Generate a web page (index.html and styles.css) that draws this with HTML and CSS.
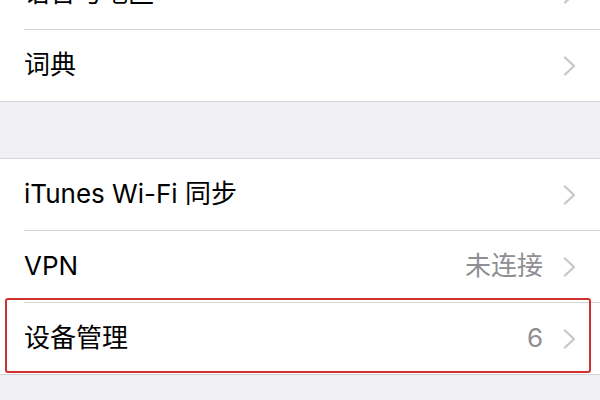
FILE: index.html
```html
<!DOCTYPE html>
<html lang="zh-CN">
<head>
<meta charset="utf-8">
<link rel="stylesheet" href="styles.css">
</head>
<body>
<div class="page">
  <div class="group first">
    <div class="row">
      <span class="label">语言与地区</span>
      <span class="right"><svg class="chev" viewBox="0 0 13 20"><path d="M2 1.5 L11 10 L2 18.5"/></svg></span>
    </div>
    <div class="row">
      <span class="label">词典</span>
      <span class="right"><svg class="chev" viewBox="0 0 13 20"><path d="M2 1.5 L11 10 L2 18.5"/></svg></span>
    </div>
  </div>
  <div class="group second">
    <div class="row">
      <span class="label">iTunes Wi-Fi 同步</span>
      <span class="right"><svg class="chev" viewBox="0 0 13 20"><path d="M2 1.5 L11 10 L2 18.5"/></svg></span>
    </div>
    <div class="row">
      <span class="label">VPN</span>
      <span class="right"><span class="value">未连接</span><svg class="chev" viewBox="0 0 13 20"><path d="M2 1.5 L11 10 L2 18.5"/></svg></span>
    </div>
    <div class="row highlighted">
      <span class="label">设备管理</span>
      <span class="right"><span class="value">6</span><svg class="chev" viewBox="0 0 13 20"><path d="M2 1.5 L11 10 L2 18.5"/></svg></span>
      <div class="mark"></div>
    </div>
  </div>
</div>
</body>
</html>
```
FILE: styles.css
```css
html, body {
  margin: 0;
  padding: 0;
}
body {
  background: #efeff4;
  width: 600px;
  height: 400px;
  overflow: hidden;
  font-family: "Inter", "Noto Sans CJK SC", sans-serif;
  color: #000;
}
.page {
  display: flex;
  flex-direction: column;
}
.group {
  background: #fff;
  border-top: 1px solid #d4d4d8;
  border-bottom: 1px solid #d4d4d8;
}
.group.first {
  margin-top: -43px;
}
.group.second {
  margin-top: 56px;
}
.row {
  position: relative;
  height: 71px;
  display: flex;
  align-items: center;
  justify-content: space-between;
  padding: 0 24px 0 24px;
}
.row + .row::before {
  content: "";
  position: absolute;
  left: 24px;
  right: 0;
  top: -1px;
  height: 1px;
  background: #d4d4d8;
}
.row + .row {
  margin-top: 1px;
}
.label {
  font-size: 26px;
  line-height: 1;
  margin-top: -1px;
}
.right {
  display: flex;
  align-items: center;
  gap: 20px;
}
.value {
  font-size: 26px;
  line-height: 1;
  margin-top: -1px;
  color: #8e8e93;
}
.chev {
  width: 13px;
  height: 20px;
  fill: none;
  stroke: #c7c7cc;
  stroke-width: 2.3;
  stroke-linecap: round;
  stroke-linejoin: round;
}
.mark {
  position: absolute;
  left: 5px;
  top: -5px;
  width: 586px;
  height: 75px;
  box-sizing: border-box;
  border: 2px solid #d0312d;
  border-radius: 3px;
}
```
